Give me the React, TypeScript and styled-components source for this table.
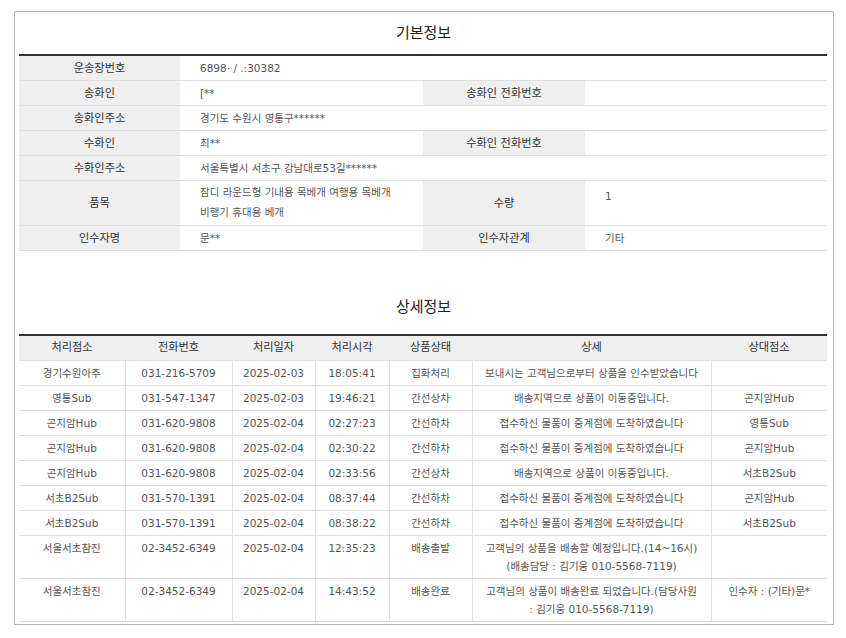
import React from "react";
import styled, { createGlobalStyle } from "styled-components";

const GlobalStyle = createGlobalStyle`
  html, body { margin: 0; padding: 0; background: #ffffff; }
  body {
    font-family: "DejaVu Sans", "Noto Sans CJK KR", sans-serif;
    font-size: 10.5px;
    color: #444;
  }
`;

const Page = styled.div`
  padding: 11px 0 0 14px;
`;

const Panel = styled.div`
  box-sizing: border-box;
  width: 820px;
  height: 614px;
  border: 1px solid #b4b4b4;
  padding: 0 5px 0 4px;
`;

const SectionTitle = styled.h2<{ $gap?: number; $pb?: number }>`
  margin: ${(p) => p.$gap ?? 0}px 0 0 0;
  height: 42px;
  display: flex;
  align-items: center;
  justify-content: center;
  padding-bottom: ${(p) => p.$pb ?? 3}px;
  box-sizing: border-box;
  font-family: "Noto Sans CJK KR", sans-serif;
  font-size: 15px;
  font-weight: 400;
  color: #222;
`;

const Table = styled.table`
  width: 808px;
  border-collapse: collapse;
  table-layout: fixed;
  border-top: 2px solid #333;
`;

const Label = styled.th`
  background: #efefef;
  color: #333;
  font-weight: 400;
  font-size: 11.2px;
  text-align: center;
  vertical-align: middle;
  padding: 4px 4px 2px 4px;
  line-height: 18px;
  border-bottom: 1px solid #dedede;
`;

const Value = styled.td<{ $top?: number; $lh?: number }>`
  color: #555;
  text-align: left;
  vertical-align: ${(p) => (p.$top !== undefined ? "top" : "middle")};
  padding: ${(p) => (p.$top !== undefined ? p.$top : 3)}px 8px 3px 20px;
  line-height: ${(p) => p.$lh ?? 18}px;
  border-bottom: 1px solid #dedede;
`;

const HeadCell = styled.th`
  background: #efefef;
  color: #333;
  font-weight: 400;
  font-size: 11.2px;
  text-align: center;
  padding: 3px 2px;
  line-height: 18px;
  border-bottom: 1px solid #dedede;
`;

const Cell = styled.td`
  color: #555;
  text-align: center;
  vertical-align: top;
  padding: 3px 2px;
  line-height: 18px;
  border-bottom: 1px solid #dedede;
  border-left: 1px solid #e2e2e2;
  &:first-child { border-left: none; }
`;

const basicCols = [161, 243, 162, 242];
const detailCols = [106, 107, 83, 74, 83, 239, 116];

type Row = [string, string, string, string, string, string[], string];

const rows: Row[] = [
  ["경기수원아주", "031-216-5709", "2025-02-03", "18:05:41", "집화처리", ["보내시는 고객님으로부터 상품을 인수받았습니다"], ""],
  ["영통Sub", "031-547-1347", "2025-02-03", "19:46:21", "간선상차", ["배송지역으로 상품이 이동중입니다."], "곤지암Hub"],
  ["곤지암Hub", "031-620-9808", "2025-02-04", "02:27:23", "간선하차", ["접수하신 물품이 중계점에 도착하였습니다"], "영통Sub"],
  ["곤지암Hub", "031-620-9808", "2025-02-04", "02:30:22", "간선하차", ["접수하신 물품이 중계점에 도착하였습니다"], "곤지암Hub"],
  ["곤지암Hub", "031-620-9808", "2025-02-04", "02:33:56", "간선상차", ["배송지역으로 상품이 이동중입니다."], "서초B2Sub"],
  ["서초B2Sub", "031-570-1391", "2025-02-04", "08:37:44", "간선하차", ["접수하신 물품이 중계점에 도착하였습니다"], "곤지암Hub"],
  ["서초B2Sub", "031-570-1391", "2025-02-04", "08:38:22", "간선하차", ["접수하신 물품이 중계점에 도착하였습니다"], "서초B2Sub"],
  ["서울서초참진", "02-3452-6349", "2025-02-04", "12:35:23", "배송출발", ["고객님의 상품을 배송할 예정입니다.(14~16시)", "(배송담당 : 김기웅 010-5568-7119)"], ""],
  ["서울서초참진", "02-3452-6349", "2025-02-04", "14:43:52", "배송완료", ["고객님의 상품이 배송완료 되었습니다.(담당사원", ": 김기웅 010-5568-7119)"], "인수자 : (기타)문*"],
];

const heads = ["처리점소", "전화번호", "처리일자", "처리시각", "상품상태", "상세", "상대점소"];

export default function App() {
  return (
    <>
      <GlobalStyle />
      <Page>
        <Panel>
          <SectionTitle>기본정보</SectionTitle>
          <Table>
            <colgroup>
              {basicCols.map((w, i) => (
                <col key={i} style={{ width: w }} />
              ))}
            </colgroup>
            <tbody>
              <tr>
                <Label>운송장번호</Label>
                <Value colSpan={3}>6898· / .:30382</Value>
              </tr>
              <tr>
                <Label>송화인</Label>
                <Value>[**</Value>
                <Label>송화인 전화번호</Label>
                <Value></Value>
              </tr>
              <tr>
                <Label>송화인주소</Label>
                <Value colSpan={3}>경기도 수원시 영통구******</Value>
              </tr>
              <tr>
                <Label>수화인</Label>
                <Value>최**</Value>
                <Label>수화인 전화번호</Label>
                <Value></Value>
              </tr>
              <tr>
                <Label>수화인주소</Label>
                <Value colSpan={3}>서울특별시 서초구 강남대로53길******</Value>
              </tr>
              <tr>
                <Label>품목</Label>
                <Value $top={1} $lh={20}>
                  잠디 라운드형 기내용 목베개 여행용 목베개
                  <br />
                  비행기 휴대용 베개
                </Value>
                <Label>수량</Label>
                <Value $top={6}>1</Value>
              </tr>
              <tr>
                <Label>인수자명</Label>
                <Value>문**</Value>
                <Label>인수자관계</Label>
                <Value>기타</Value>
              </tr>
            </tbody>
          </Table>

          <SectionTitle $gap={41} $pb={15}>상세정보</SectionTitle>
          <Table>
            <colgroup>
              {detailCols.map((w, i) => (
                <col key={i} style={{ width: w }} />
              ))}
            </colgroup>
            <thead>
              <tr>
                {heads.map((h) => (
                  <HeadCell key={h}>{h}</HeadCell>
                ))}
              </tr>
            </thead>
            <tbody>
              {rows.map((r, i) => (
                <tr key={i}>
                  <Cell>{r[0]}</Cell>
                  <Cell>{r[1]}</Cell>
                  <Cell>{r[2]}</Cell>
                  <Cell>{r[3]}</Cell>
                  <Cell>{r[4]}</Cell>
                  <Cell>
                    {r[5].map((line, j) => (
                      <React.Fragment key={j}>
                        {j > 0 && <br />}
                        {line}
                      </React.Fragment>
                    ))}
                  </Cell>
                  <Cell>{r[6]}</Cell>
                </tr>
              ))}
            </tbody>
          </Table>
        </Panel>
      </Page>
    </>
  );
}
